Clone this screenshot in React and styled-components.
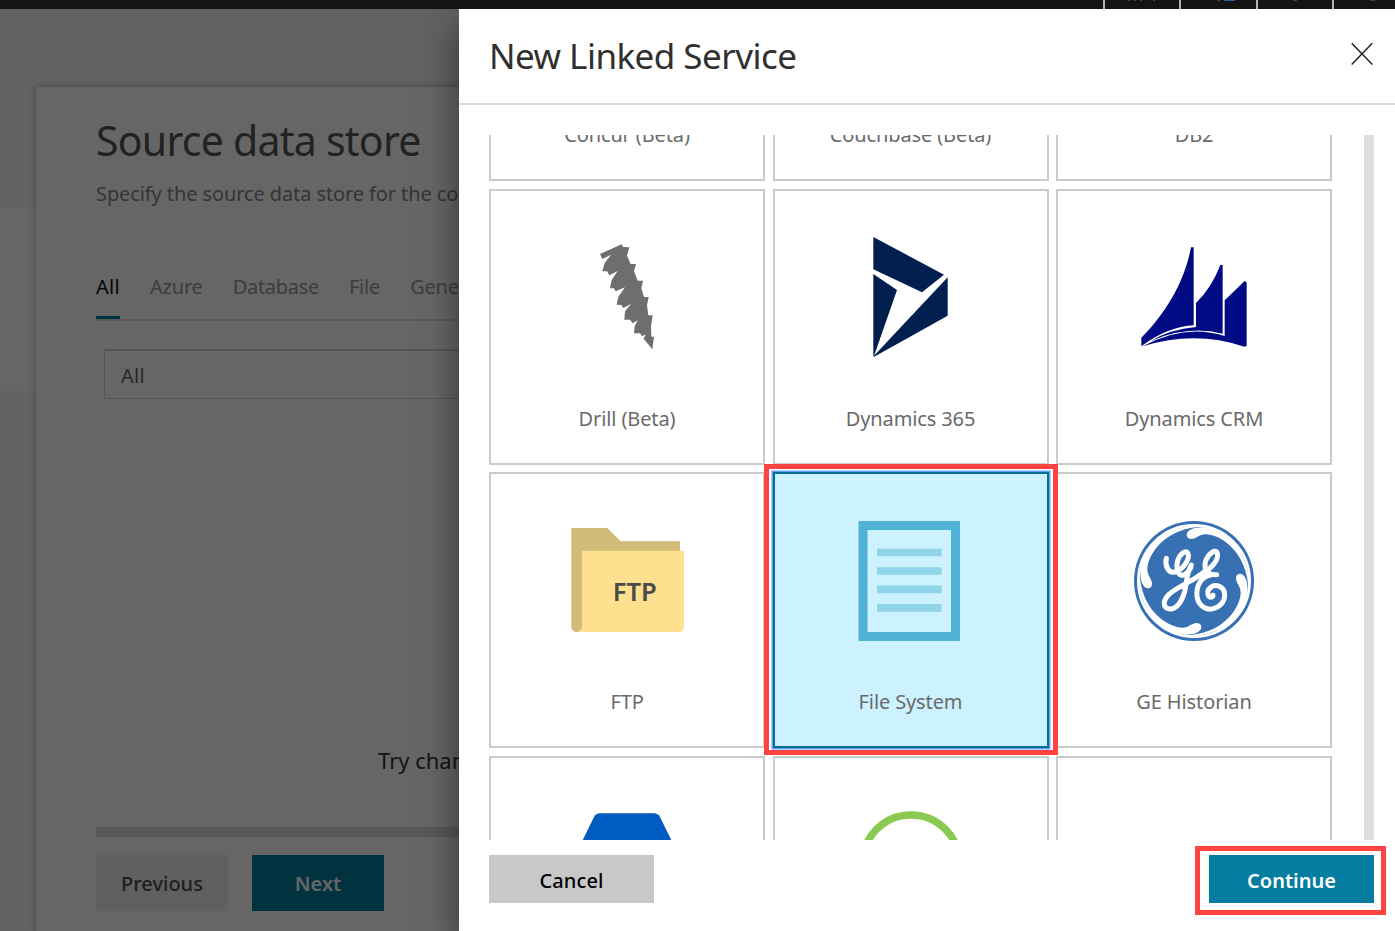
import React from "react";
import styled, { createGlobalStyle, css } from "styled-components";

const GlobalStyle = createGlobalStyle`
  *, *::before, *::after { box-sizing: border-box; }
  body { margin: 0; background: #fff; font-family: "Noto Sans", "Open Sans", sans-serif; font-size: 20px; }
`;

const Screen = styled.div`
  position: relative;
  display: flex;
  flex-direction: column;
  width: 1395px;
  height: 931px;
  overflow: hidden;
`;

const TopBar = styled.header`
  flex: none;
  display: flex;
  justify-content: flex-end;
  height: 9px;
  background: #141414;
`;

const TopCell = styled.div`
  width: ${(p) => p.$w}px;
  border-left: 2px solid #b4b4b4;
  svg { display: block; }
`;

const Workspace = styled.div`
  flex: 1;
  min-height: 0;
  display: flex;
  background: #f5f5f5;
`;

const SideRail = styled.nav`
  width: 36px;
  padding-top: 199px;
`;

const ActiveStep = styled.div`
  height: 183px;
  background: #fff;
`;

const Wizard = styled.main`
  flex: 1;
  margin-top: 78px;
  padding: 26px 60px 0;
  display: flex;
  flex-direction: column;
  background: #fff;
  box-shadow: 0 0 6px 1px rgba(0, 0, 0, 0.25);
`;

const WizardTitle = styled.h1`
  margin: 0;
  font-size: 41px;
  font-weight: 400;
  line-height: 54px;
  letter-spacing: -0.75px;
  color: #555;
`;

const Subtitle = styled.p`
  margin: 12px 0 0;
  line-height: 30px;
  letter-spacing: -0.1px;
  color: #858585;
  white-space: nowrap;
`;

const Tabs = styled.div`
  display: flex;
  gap: 30px;
  height: 50px;
  margin-top: 62px;
  border-bottom: 2px solid #dedede;
`;

const Tab = styled.div`
  height: 48px;
  padding-top: 1px;
  line-height: 30px;
  letter-spacing: ${(p) => p.$spacing || -0.2}px;
  color: ${(p) => (p.$active ? "#111" : "#999")};
  border-bottom: 3px solid ${(p) => (p.$active ? "#007b9e" : "transparent")};
`;

const Select = styled.div`
  height: 50px;
  margin: 28px 8px 0;
  padding-left: 16px;
  border: 1px solid #d2d2d2;
  border-top-width: 2px;
  line-height: 50px;
  letter-spacing: 0.3px;
  color: #666;
`;

const Hint = styled.p`
  margin: 345px 0 0 282px;
  font-size: 22px;
  line-height: 32px;
  white-space: nowrap;
  color: #333;
`;

const HorizontalScroll = styled.div`
  height: 10px;
  margin-top: 51px;
  background: #dedede;
`;

const WizardActions = styled.div`
  display: flex;
  gap: 24px;
  margin-top: 18px;
`;

const variants = {
  muted: css`background: #f1f1f1; color: #4b4b4b; font-weight: 500;`,
  primary: css`background: #047da0; color: #fff; font-weight: 600;`,
  neutral: css`background: #c8c8c8; color: #000; font-weight: 500; letter-spacing: 0.1px;`,
};

const Button = styled.button`
  position: relative;
  width: ${(p) => p.$width}px;
  height: ${(p) => p.$height}px;
  padding: ${(p) => p.$drop || 0}px 0 0;
  border: 0;
  font: inherit;
  ${(p) => variants[p.$variant]}
`;

const Scrim = styled.div`
  position: absolute;
  inset: 9px 0 0;
  overflow: hidden;
  background: rgba(0, 0, 0, 0.6);
`;

const Drawer = styled.aside`
  display: flex;
  flex-direction: column;
  height: 100%;
  margin-left: 459px;
  background: #fff;
  box-shadow: 0 16px 34px rgba(0, 0, 0, 0.5);
`;

const DrawerHeader = styled.div`
  flex: none;
  display: flex;
  justify-content: space-between;
  align-items: flex-start;
  height: 96px;
  padding: 21px 20px 0 30px;
  border-bottom: 2px solid #dcdcdc;
`;

const DrawerTitle = styled.h2`
  margin: 0;
  font-size: 35px;
  font-weight: 400;
  line-height: 52px;
  letter-spacing: -0.54px;
  color: #303030;
`;

const CloseIcon = styled.svg`
  width: 26px;
  height: 26px;
  margin-top: 11px;
`;

const DrawerBody = styled.div`
  flex: none;
  display: flex;
  justify-content: space-between;
  height: 705px;
  margin: 30px 21px 0 30px;
`;

const GridViewport = styled.div`
  width: 843px;
  height: 705px;
  overflow: hidden;
`;

const ConnectorGrid = styled.div`
  display: grid;
  grid-template-columns: repeat(3, 276px);
  grid-auto-rows: 276px;
  gap: 7.4px 7.5px;
  margin-top: -229.6px;
`;

const VerticalScroll = styled.div`
  width: 10px;
  background: #dedede;
`;

const ring = css`
  &::after {
    content: "";
    position: absolute;
    inset: ${(p) => p.$ring};
    border: 5px solid #ff4343;
    pointer-events: none;
  }
`;

const Card = styled.div`
  position: relative;
  display: flex;
  flex-direction: column;
  align-items: center;
  padding-top: 46.5px;
  border: 2px solid #cacaca;
  ${(p) =>
    p.$selected &&
    css`
      z-index: 1;
      background: #cdf2ff;
      border-color: #006f94;
      box-shadow: 0 0 0 1.5px #64a0f4;
      ${ring}
    `}
`;

const CardIcon = styled.svg`
  width: 120px;
  height: 120px;
  overflow: visible;
`;

const CardLabel = styled.span`
  margin-top: 46.5px;
  line-height: 30px;
  letter-spacing: -0.12px;
  color: #6a6a6a;
`;

const DrawerActions = styled.div`
  display: flex;
  justify-content: space-between;
  margin: 15px 21px 0 30px;
`;

const RingedButton = styled(Button)`
  ${ring}
`;

const Drill = () => (
  <CardIcon viewBox="21 51 360 360">
    <path fill="#6e6e6e" d="M120 102 L185 73 L189 81 L208 82 L201 107 L212 132 L228 132 L222 154 L233 182 L249 182 L244 205 L252 231 L266 231 L261 256 L265 286 L278 286 L273 318 L274 350 L282 350 L277 388 L251 356 L257 343 L247 349 L240 340 L222 340 L224 318 L233 301 L218 310 L210 299 L193 299 L195 274 L214 251 L190 264 L184 255 L170 254 L175 230 L195 202 L167 214 L162 205 L150 205 L155 180 L173 153 L148 166 L141 154 L127 154 L134 129 L153 104 L127 117 Z" />
  </CardIcon>
);

const Dynamics365 = () => (
  <CardIcon viewBox="33 51 360 360">
    <g fill="#001f4e">
      <path d="M100 51 L312 164 L246 217 L100 148 Z" />
      <path d="M100 162 L171 210 L102 408 L100 408 Z" />
      <path d="M323 172 V287 L100 412 L104 405 Z" />
    </g>
  </CardIcon>
);

const DynamicsCrm = () => (
  <CardIcon viewBox="42 51 360 360">
    <g fill="#000a84">
      <path d="M213 82 H221 V316 Q145 320 68 376 L64 379 V353 C140 278 195 180 213 82 Z" />
      <path d="M301 135 H308 V341 Q205 315 92 363 Q150 328 228 321 V249 Q275 203 301 135 Z" />
      <path d="M374 183 L380 187 V378 L373 380 Q225 330 68 379 Q195 310 314 348 V241 Z" />
    </g>
  </CardIcon>
);

const FtpText = styled.text`
  font: 600 77px "Noto Sans", sans-serif;
  fill: #4b4b4b;
`;

const Ftp = () => (
  <CardIcon viewBox="51 33 360 360">
    <path fill="#d1bb78" d="M64 54 H172 L212 94 H390 V130 H97 V350 A16 16 0 0 1 64 350 Z" />
    <path fill="#ffe08f" d="M96 122 H402 V350 Q402 366 386 366 H82 Q96 364 96 350 Z" />
    <FtpText x="254" y="272" textAnchor="middle" textLength="132">FTP</FtpText>
  </CardIcon>
);

const FileSystem = () => (
  <CardIcon viewBox="288 198 360 360">
    <path fill="none" stroke="#50b2d6" strokeWidth="27" d="M324 211.500 H601.500 V544.500 H324 Z" />
    <path fill="none" stroke="#90d4ea" strokeWidth="23" d="M366 292.500 H560 M366 348 H560 M366 403 H560 M366 458.500 H560" />
  </CardIcon>
);

const Swirl = "M200 76 C199 62 219 52 246 52 C315 55 374 112 386 200 C388 220 387 232 385 242 C385 215 380 190 370 165 C348 112 300 75 257 73 C237 73 229 87 214 87 C206 87 201 83 200 76 Z";

const GeHistorian = () => (
  <CardIcon viewBox="42 33 360 360">
    <circle cx="222" cy="213" r="180" fill="#3771b4" />
    <circle cx="222" cy="213" r="167" fill="none" stroke="#fff" strokeWidth="8" />
    {[0, 90, 180, 270].map((a) => (
      <path key={a} d={Swirl} fill="#fff" transform={`rotate(${a} 222 213)`} />
    ))}
    <g fill="none" stroke="#fff" strokeWidth="15" strokeLinecap="round" strokeLinejoin="round">
      <path d="M139 145 C134 166 144 190 164 186 C192 178 210 145 204 130 C199 117 180 131 173 152 C167 174 173 197 187 196 C203 192 214 174 214 165 C199 190 201 215 194 244 C186 275 169 298 150 297 C128 296 127 272 147 253 C181 224 219 215 254 184 C281 171 296 145 292 130 C287 115 266 130 258 150 C250 174 257 196 290 194" />
      <path d="M272 195 C244 200 228 226 231 258 C235 291 264 306 291 292 C321 275 320 239 298 229 C277 221 260 238 264 253 C267 265 280 263 279 256" />
    </g>
  </CardIcon>
);

const BlueHex = () => (
  <CardIcon viewBox="0 0 120 120">
    <path fill="#005bc0" d="M33 9.300 H87 Q91 9.300 93 13 L116 60 L93 107 Q91 111 87 111 H33 Q29 111 27 107 L4 60 L27 13 Q29 9.300 33 9.300 Z" />
  </CardIcon>
);

const GreenRing = () => (
  <CardIcon viewBox="0 0 120 120">
    <circle cx="60" cy="59.500" r="48.500" fill="none" stroke="#8cc951" strokeWidth="7.500" />
  </CardIcon>
);

const connectors = [
  { label: "Concur (Beta)" },
  { label: "Couchbase (Beta)" },
  { label: "DB2" },
  { label: "Drill (Beta)", Icon: Drill },
  { label: "Dynamics 365", Icon: Dynamics365 },
  { label: "Dynamics CRM", Icon: DynamicsCrm },
  { label: "FTP", Icon: Ftp },
  { label: "File System", Icon: FileSystem, selected: true },
  { label: "GE Historian", Icon: GeHistorian },
  { label: "", Icon: BlueHex },
  { label: "", Icon: GreenRing },
  { label: "" },
];

const topCells = [
  { w: 76, marks: [[23, 2], [29, 2], [35, 2], [48, 2]] },
  { w: 77, marks: [[36, 3]], accent: [43, 11] },
  { w: 76, marks: [[35, 4]] },
  { w: 63, marks: [[36, 5]] },
];

export default function App() {
  return (
    <Screen>
      <GlobalStyle />
      <TopBar>
        {topCells.map((c, i) => (
          <TopCell key={i} $w={c.w}>
            <svg width="60" height="2">
              {c.marks.map(([x, w]) => <rect key={x} x={x} width={w} height="1" fill="#444" />)}
              {c.accent && <rect x={c.accent[0]} width={c.accent[1]} height="1" fill="#2860a8" />}
            </svg>
          </TopCell>
        ))}
      </TopBar>
      <Workspace>
        <SideRail><ActiveStep /></SideRail>
        <Wizard>
          <WizardTitle>Source data store</WizardTitle>
          <Subtitle>Specify the source data store for the copy</Subtitle>
          <Tabs>
            <Tab $active $spacing={0.3}>All</Tab>
            <Tab>Azure</Tab>
            <Tab $spacing={-0.3}>Database</Tab>
            <Tab>File</Tab>
            <Tab>Generic</Tab>
          </Tabs>
          <Select>All</Select>
          <Hint>Try changing</Hint>
          <HorizontalScroll />
          <WizardActions>
            <Button $variant="muted" $width={132} $height={56}>Previous</Button>
            <Button $variant="primary" $width={132} $height={56}>Next</Button>
          </WizardActions>
        </Wizard>
      </Workspace>
      <Scrim>
        <Drawer>
          <DrawerHeader>
            <DrawerTitle>New Linked Service</DrawerTitle>
            <CloseIcon viewBox="0 0 26 26">
              <path d="M2.700 2.200 L23.300 23.500 M23.300 2.200 L2.700 23.500" stroke="#222" strokeWidth="1.500" fill="none" />
            </CloseIcon>
          </DrawerHeader>
          <DrawerBody>
            <GridViewport>
              <ConnectorGrid>
                {connectors.map(({ label, Icon, selected }, i) => (
                  <Card key={i} $selected={selected} $ring="-10px -11px -9px -11px">
                    {Icon ? <Icon /> : <CardIcon viewBox="0 0 120 120" />}
                    <CardLabel>{label}</CardLabel>
                  </Card>
                ))}
              </ConnectorGrid>
            </GridViewport>
            <VerticalScroll />
          </DrawerBody>
          <DrawerActions>
            <Button $variant="neutral" $width={165} $height={48} $drop={2}>Cancel</Button>
            <RingedButton $variant="primary" $width={165} $height={48} $drop={2} $ring="-9px -12px -12px -14px">Continue</RingedButton>
          </DrawerActions>
        </Drawer>
      </Scrim>
    </Screen>
  );
}
